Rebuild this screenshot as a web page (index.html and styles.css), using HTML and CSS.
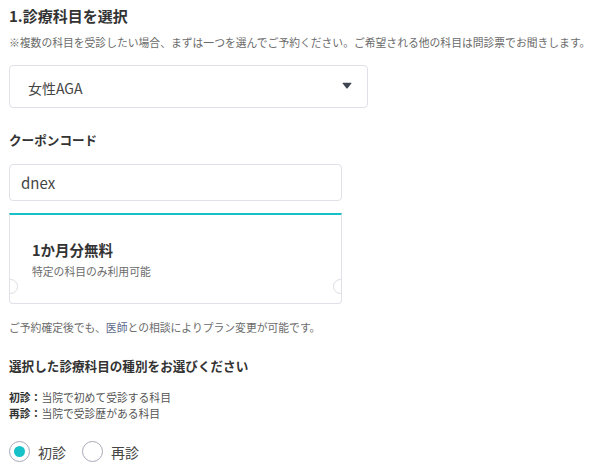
FILE: index.html
```html
<!DOCTYPE html>
<html lang="ja">

<head>
    <meta charset="UTF-8">
    <meta name="viewport" content="width=device-width, initial-scale=1.0">
    <title>診療科目の選択</title>
    <link rel="stylesheet" href="styles.css">
</head>

<body>
    <div class="main">
        <h2 class="ttl">1.診療科目を選択</h2>
        <p class="note">※複数の科目を受診したい場合、まずは一つを選んでご予約ください。ご希望される他の科目は問診票でお聞きします。</p>

        <div class="sel">
            <span>女性AGA</span>
            <svg width="10" height="7" viewBox="0 0 10 7"><path d="M1 0.8 H9 Q9.8 0.8 9.3 1.5 L5.6 6.2 Q5 6.9 4.4 6.2 L0.7 1.5 Q0.2 0.8 1 0.8 Z" fill="#3d4550"/></svg>
        </div>

        <h3 class="lbl">クーポンコード</h3>
        <input class="code" type="text" value="dnex">

        <div class="coupon">
            <div class="coupon-ttl">1か月分無料</div>
            <div class="coupon-sub">特定の科目のみ利用可能</div>
        </div>

        <p class="note change">ご予約確定後でも、<span class="doc">医師</span>との相談によりプラン変更が可能です。</p>

        <h3 class="lbl kind">選択した診療科目の種別をお選びください</h3>
        <div class="desc">
            <p><b>初診：</b>当院で初めて受診する科目</p>
            <p><b>再診：</b>当院で受診歴がある科目</p>
        </div>

        <div class="radios">
            <label class="rd"><span class="dot on"></span>初診</label>
            <label class="rd"><span class="dot"></span>再診</label>
        </div>
    </div>
</body>

</html>
```

FILE: styles.css
```css
* {
    box-sizing: border-box;
    margin: 0;
    padding: 0;
}

body {
    background-color: #fff;
    font-family: "Noto Sans CJK JP", "Noto Sans", sans-serif;
    color: #333;
}

.main {
    padding: 5px 9px 0;
}

.ttl {
    font-size: 15px;
    line-height: 22px;
    font-weight: 700;
    color: #333;
}

.note {
    margin-top: 7px;
    font-size: 10.8px;
    line-height: 16px;
    color: #6b6b6b;
    white-space: nowrap;
}

.sel {
    margin-top: 15px;
    width: 359px;
    height: 43px;
    border: 1px solid #e1e0e9;
    border-radius: 4px;
    display: flex;
    align-items: center;
    justify-content: space-between;
    padding: 2px 15px 0 18px;
    font-size: 14px;
    color: #444;
}

.sel svg {
    margin-top: -4px;
}

.lbl {
    margin-top: 22px;
    font-size: 12.6px;
    line-height: 20px;
    font-weight: 700;
    color: #333;
}

.code {
    display: block;
    margin-top: 14px;
    width: 333px;
    height: 37px;
    border: 1px solid #e1e0e9;
    border-radius: 4px;
    padding: 0 11px;
    font-family: inherit;
    font-size: 15px;
    color: #444;
    outline: none;
}

.coupon {
    position: relative;
    overflow: hidden;
    margin-top: 12px;
    width: 333px;
    border: 1px solid #e1e0e9;
    border-top: 2px solid #17c1c8;
    border-radius: 0 0 4px 4px;
    padding: 24px 22px 24px;
}

.coupon::before,
.coupon::after {
    content: "";
    position: absolute;
    top: 64px;
    width: 13px;
    height: 13px;
    border: 1px solid #dcdbe5;
    border-radius: 50%;
    background-color: #fff;
}

.coupon::before {
    left: -7px;
}

.coupon::after {
    right: -7px;
}

.coupon-ttl {
    font-size: 14.5px;
    line-height: 22px;
    font-weight: 700;
    color: #333;
}

.coupon-sub {
    margin-top: 2px;
    font-size: 10.8px;
    line-height: 16px;
    color: #6b6b6b;
}

.change {
    margin-top: 15px;
}

.doc {
    color: #5b6a8c;
}

.kind {
    margin-top: 21px;
}

.desc {
    margin-top: 13px;
    font-size: 10.8px;
    line-height: 16px;
    color: #555;
}

.desc b {
    color: #333;
}

.radios {
    margin-top: 20px;
    display: flex;
    gap: 16px;
}

.rd {
    display: flex;
    align-items: center;
    gap: 8px;
    font-size: 14px;
    line-height: 20px;
    color: #444;
}

.dot {
    width: 21px;
    height: 21px;
    border: 1px solid #a9a8b8;
    border-radius: 50%;
    display: flex;
    align-items: center;
    justify-content: center;
}

.dot.on::before {
    content: "";
    width: 11px;
    height: 11px;
    border-radius: 50%;
    background-color: #17c1c8;
}
```
